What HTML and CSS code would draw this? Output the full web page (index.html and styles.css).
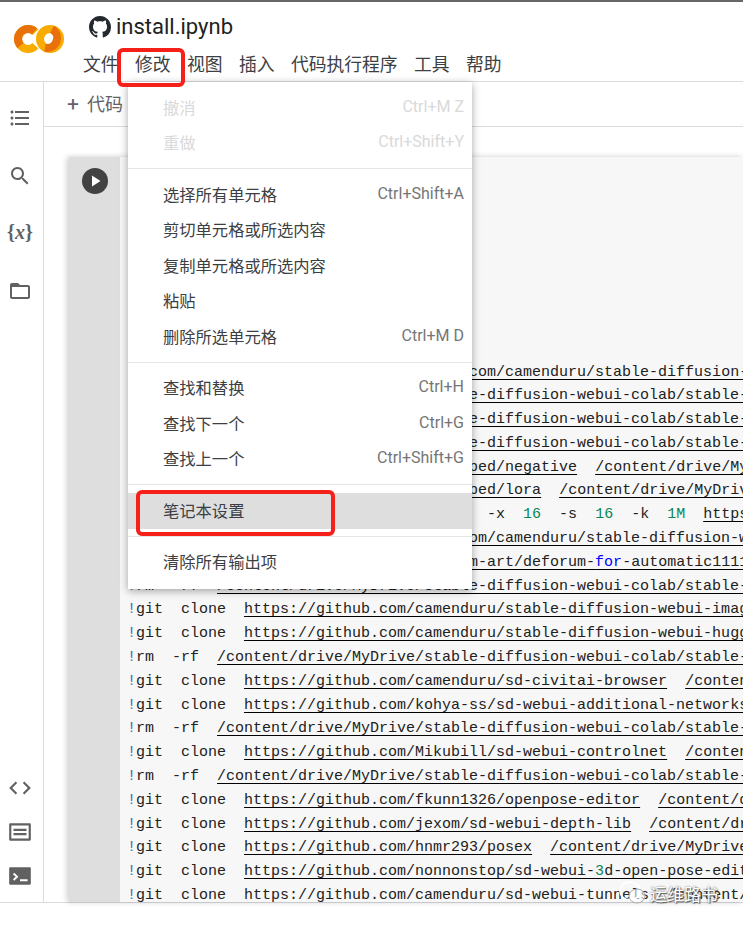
FILE: index.html
```html
<!DOCTYPE html>
<html lang="zh-CN">

<head>
    <meta charset="UTF-8">
    <title>install.ipynb - Colaboratory</title>
    <link rel="stylesheet" href="styles.css">
</head>

<body>

    <div class="page">
        <header class="header">
            <svg class="logo" width="50" height="30" viewBox="0 0 50 30">
                <path d="M21.400 8.200A10 10 0 1 0 21.400 21.800" fill="none" stroke="#f9ab00" stroke-width="8"/>
                <path d="M20.500 7.400A10 10 0 0 0 6.500 21.600" fill="none" stroke="#e8710a" stroke-width="8"/>
                <circle cx="36" cy="15" r="10" fill="none" stroke="#f9ab00" stroke-width="8"/>
                <path d="M38 5.200A10 10 0 0 1 31 23.700" fill="none" stroke="#e8710a" stroke-width="8"/>
            </svg>
            <div class="header-main">
                <div class="title-row">
                    <svg class="github" width="22" height="22" viewBox="0 0 16 16">
                        <path fill="#24292e" d="M8 0C3.58 0 0 3.58 0 8c0 3.54 2.29 6.53 5.47 7.59.4.07.55-.17.55-.38 0-.19-.01-.82-.01-1.49-2.01.37-2.53-.49-2.69-.94-.09-.23-.48-.94-.82-1.13-.28-.15-.68-.52-.01-.53.63-.01 1.08.58 1.23.82.72 1.21 1.87.87 2.33.66.07-.52.28-.87.51-1.07-1.78-.2-3.64-.89-3.64-3.95 0-.87.31-1.59.82-2.15-.08-.2-.36-1.02.08-2.12 0 0 .67-.21 2.2.82.64-.18 1.32-.27 2-.27.68 0 1.36.09 2 .27 1.53-1.04 2.2-.82 2.2-.82.44 1.1.16 1.92.08 2.12.51.56.82 1.27.82 2.15 0 3.07-1.87 3.75-3.65 3.95.29.25.54.73.54 1.48 0 1.07-.01 1.93-.01 2.2 0 .21.15.46.55.38A8.013 8.013 0 0016 8c0-4.42-3.58-8-8-8z"/>
                    </svg>
                    <span class="title">install.ipynb</span>
                </div>
                <nav class="menubar">
                    <span>文件</span>
                    <span>修改</span>
                    <span>视图</span>
                    <span>插入</span>
                    <span>代码执行程序</span>
                    <span>工具</span>
                    <span>帮助</span>
                </nav>
            </div>
        </header>

        <div class="workspace">
            <aside class="sidebar">
                <div class="side-top">
                    <svg class="side-icon" viewBox="0 0 24 24"><path d="M4 10.5c-.83 0-1.5.67-1.5 1.5s.67 1.5 1.5 1.5 1.5-.67 1.5-1.5-.67-1.5-1.5-1.5zm0-6c-.83 0-1.5.67-1.5 1.5S3.17 7.5 4 7.5 5.5 6.83 5.5 6 4.83 4.5 4 4.5zm0 12c-.83 0-1.5.68-1.5 1.5s.68 1.5 1.5 1.5 1.5-.68 1.5-1.5-.67-1.5-1.5-1.5zM7 19h14v-2H7v2zm0-6h14v-2H7v2zm0-8v2h14V5H7z"/></svg>
                    <svg class="side-icon" viewBox="0 0 24 24"><path d="M15.5 14h-.79l-.28-.27C15.41 12.59 16 11.11 16 9.5 16 5.91 13.09 3 9.5 3S3 5.91 3 9.5 5.91 16 9.5 16c1.61 0 3.09-.59 4.23-1.57l.27.28v.79l5 4.99L20.49 19l-4.99-5zm-6 0C7.01 14 5 11.99 5 9.5S7.01 5 9.5 5 14 7.01 14 9.5 11.99 14 9.5 14z"/></svg>
                    <span class="side-var">{<i>x</i>}</span>
                    <svg class="side-icon" viewBox="0 0 24 24"><path d="M20 6h-8l-2-2H4c-1.1 0-1.99.9-1.99 2L2 18c0 1.1.9 2 2 2h16c1.1 0 2-.9 2-2V8c0-1.1-.9-2-2-2zm0 12H4V8h16v10z"/></svg>
                </div>
                <div class="side-bottom">
                    <svg class="side-icon side-icon-big" viewBox="0 0 24 24"><path d="M9.4 16.6L4.8 12l4.6-4.6L8 6l-6 6 6 6 1.4-1.4zm5.2 0l4.6-4.6-4.6-4.6L16 6l6 6-6 6-1.4-1.4z"/></svg>
                    <svg class="side-icon side-icon-big" viewBox="0 0 24 24"><path fill-rule="evenodd" d="M3 4h18c.6 0 1 .4 1 1v14c0 .6-.4 1-1 1H3c-.6 0-1-.4-1-1V5c0-.6.4-1 1-1zm1 2v12h16V6H4zm2 3h12v2H6V9zm0 4h12v2H6v-2z"/></svg>
                    <svg class="side-icon side-icon-big" viewBox="0 0 24 24"><path fill-rule="evenodd" d="M3 4h18c.6 0 1 .4 1 1v14c0 .6-.4 1-1 1H3c-.6 0-1-.4-1-1V5c0-.6.4-1 1-1zm2.5 6.4L8 12.7l-2.5 2.3L6.7 16.300l3.800-3.600-3.800-3.600-1.200 1.300zM12 15v1.800h7V15h-7z"/></svg>
                </div>
            </aside>

            <main class="content">
                <div class="toolbar"><span class="plus">+</span> 代码</div>
                <div class="cell-area">
                    <section class="cell">
                        <div class="gutter">
                            <svg class="run" width="26" height="26" viewBox="0 0 26 26">
                                <circle cx="13" cy="13" r="13" fill="#424242"/>
                                <path d="M10 7.500v11l8.500-5.500z" fill="#fff"/>
                            </svg>
                        </div>
                        <div class="code">
<div><b>!</b>git  clone  -b  v2.2  <u>https://github.com/camenduru/stable-diffusion-webui</u></div>
<div><b>!</b>rm  -rf  <u>/content/drive/MyDrive/stable-diffusion-webui-colab/stable-diffusion-webui</u></div>
<div><b>!</b>rm  -rf  <u>/content/drive/MyDrive/stable-diffusion-webui-colab/stable-diffusion-webui</u></div>
<div><b>!</b>rm  -rf  <u>/content/drive/MyDrive/stable-diffusion-webui-colab/stable-diffusion-webui</u></div>
<div><b>!</b>git  clone  <u>https://huggingface.co/embed/negative</u>  <u>/content/drive/MyDrive/stable-diffusion-webui</u></div>
<div><b>!</b>git  clone  <u>https://huggingface.co/embed/lora</u>  <u>/content/drive/MyDrive/stable-diffusion-webui</u></div>
<div><b>!</b>aria2c  --console-log-level=error  -c  -x  <em>16</em>  -s  <em>16</em>  -k  <em>1M</em>  <u>https://huggingface.co/embed</u></div>
<div><b>!</b>git  clone  -b  dev  <u>https://github.com/camenduru/stable-diffusion-webui-colab</u></div>
<div><b>!</b>git  clone  <u>https://github.com/deforum-art/deforum-<a>for</a>-automatic1111-webui</u></div>
<div><b>!</b>rm  -rf  <u>/content/drive/MyDrive/stable-diffusion-webui-colab/stable-diffusion-webui</u></div>
<div><b>!</b>git  clone  <u>https://github.com/camenduru/stable-diffusion-webui-images-browser</u></div>
<div><b>!</b>git  clone  <u>https://github.com/camenduru/stable-diffusion-webui-huggingface</u></div>
<div><b>!</b>rm  -rf  <u>/content/drive/MyDrive/stable-diffusion-webui-colab/stable-diffusion-webui</u></div>
<div><b>!</b>git  clone  <u>https://github.com/camenduru/sd-civitai-browser</u>  <u>/content/drive/MyDrive</u></div>
<div><b>!</b>git  clone  <u>https://github.com/kohya-ss/sd-webui-additional-networks</u>  <u>/content/drive</u></div>
<div><b>!</b>rm  -rf  <u>/content/drive/MyDrive/stable-diffusion-webui-colab/stable-diffusion-webui</u></div>
<div><b>!</b>git  clone  <u>https://github.com/Mikubill/sd-webui-controlnet</u>  <u>/content/drive/MyDrive</u></div>
<div><b>!</b>rm  -rf  <u>/content/drive/MyDrive/stable-diffusion-webui-colab/stable-diffusion-webui</u></div>
<div><b>!</b>git  clone  <u>https://github.com/fkunn1326/openpose-editor</u>  <u>/content/drive/MyDrive</u></div>
<div><b>!</b>git  clone  <u>https://github.com/jexom/sd-webui-depth-lib</u>  <u>/content/drive/MyDrive</u></div>
<div><b>!</b>git  clone  <u>https://github.com/hnmr293/posex</u>  <u>/content/drive/MyDrive/stable-diffusion</u></div>
<div><b>!</b>git  clone  <u>https://github.com/nonnonstop/sd-webui-<em>3</em>d-open-pose-editor</u>  <u>/content/drive</u></div>
<div><b>!</b>git  clone  <u>https://github.com/camenduru/sd-webui-tunnels</u>  <u>/content/drive/MyDrive</u></div>
                        </div>
                    </section>
                </div>
            </main>
        </div>

        <!-- edit dropdown, sits over the notebook -->
        <div class="dropdown">
            <div class="item off"><span>撤消</span><kbd>Ctrl+M Z</kbd></div>
            <div class="item off"><span>重做</span><kbd>Ctrl+Shift+Y</kbd></div>
            <hr>
            <div class="item"><span>选择所有单元格</span><kbd>Ctrl+Shift+A</kbd></div>
            <div class="item"><span>剪切单元格或所选内容</span></div>
            <div class="item"><span>复制单元格或所选内容</span></div>
            <div class="item"><span>粘贴</span></div>
            <div class="item"><span>删除所选单元格</span><kbd>Ctrl+M D</kbd></div>
            <hr>
            <div class="item"><span>查找和替换</span><kbd>Ctrl+H</kbd></div>
            <div class="item"><span>查找下一个</span><kbd>Ctrl+G</kbd></div>
            <div class="item"><span>查找上一个</span><kbd>Ctrl+Shift+G</kbd></div>
            <hr>
            <div class="item active"><span>笔记本设置</span></div>
            <hr>
            <div class="item"><span>清除所有输出项</span></div>
        </div>

        <div class="mark mark-menu"></div>
        <div class="mark mark-item"></div>

        <div class="watermark">
            <svg width="30" height="26" viewBox="0 0 30 26">
                <ellipse cx="12" cy="11" rx="10" ry="9" fill="none" stroke="#fff" stroke-width="1.500"/>
                <ellipse cx="19" cy="16" rx="8" ry="7" fill="#fff" fill-opacity="0.6" stroke="#aaa"/>
            </svg>
            <span>运维路书</span>
        </div>
    </div>

</body>

</html>
```

FILE: styles.css
```css
* {
    box-sizing: border-box;
}

body {
    margin: 0;
    background-color: #fff;
    font-family: "Noto Sans CJK SC", "Noto Sans", sans-serif;
}

.page {
    position: relative;
    width: 743px;
    height: 930px;
    overflow: hidden;
    border-top: 2px solid #666;
}

/* header */
.header {
    display: flex;
    height: 80px;
    border-bottom: 1px solid #dadce0;
}

.logo {
    flex: none;
    margin: 22px 19px 0 14px;
}

.header-main {
    display: flex;
    flex-direction: column;
}

.title-row {
    display: flex;
    align-items: center;
    gap: 5px;
    height: 34px;
    padding: 15px 0 0 6px;
}

.title {
    font-family: Roboto, sans-serif;
    font-size: 22px;
    color: #212121;
}

.menubar {
    display: flex;
    gap: 16.400px;
    margin-top: 14px;
    font-size: 17.800px;
    line-height: 26px;
    color: #3c4043;
}

/* sidebar */
.workspace {
    display: flex;
    height: 821px;
    border-bottom: 1px solid #dadce0;
}

.sidebar {
    display: flex;
    flex: none;
    flex-direction: column;
    justify-content: space-between;
    width: 44px;
    padding: 24px 3px 13px 0;
    border-right: 1px solid #dadce0;
}

.side-top,
.side-bottom {
    display: flex;
    flex-direction: column;
    align-items: center;
}

.side-top {
    gap: 34px;
}

.side-bottom {
    gap: 18px;
}

.side-icon {
    width: 24px;
    height: 24px;
    fill: #616161;
}

.side-icon-big {
    width: 26px;
    height: 26px;
}

.side-var {
    height: 24px;
    margin: -2px 0 1px;
    font-family: "Liberation Serif", serif;
    font-size: 20px;
    font-weight: bold;
    line-height: 24px;
    color: #616161;
}

/* notebook */
.content {
    display: flex;
    flex: 1;
    flex-direction: column;
    min-width: 0;
}

.toolbar {
    height: 45px;
    padding-left: 23px;
    border-bottom: 1px solid #dadce0;
    font-size: 18px;
    line-height: 43px;
    color: #5f6368;
}

.plus {
    margin-right: 4px;
    font-family: Roboto, sans-serif;
    font-size: 21px;
}

.cell-area {
    flex: 1;
    min-height: 0;
    padding: 30px 0 0 25px;
}

.cell {
    display: flex;
    height: 100%;
    overflow: hidden;
    background-color: #f7f7f7;
    box-shadow: -2px 0 6px rgba(0, 0, 0, 0.2);
}

.gutter {
    flex: none;
    width: 51px;
    padding: 11px 0 0 13px;
    background-color: #dedede;
}

.run {
    display: block;
}

.code {
    flex: 1;
    min-width: 0;
    padding: 203.500px 0 0 9px;
    font-family: "Liberation Mono", monospace;
    font-size: 15px;
    line-height: 23.800px;
    color: #212121;
}

.code div {
    white-space: pre;
}

.code b {
    margin-left: -2px;
    font-weight: normal;
    color: #3a6fb5;
}

.code u {
    text-decoration-color: #000;
    text-underline-offset: 3px;
}

.code em {
    font-style: normal;
    color: #098658;
}

.code a {
    color: #0000ff;
}

/* edit menu */
.dropdown {
    position: absolute;
    top: 80px;
    left: 128px;
    width: 344px;
    height: 507px;
    padding-top: 8px;
    background-color: #fff;
    box-shadow: 0 2px 8px rgba(0, 0, 0, 0.35);
}

.item {
    display: flex;
    justify-content: space-between;
    align-items: center;
    height: 35.500px;
    padding: 0 8px 2px 35px;
    font-size: 16.300px;
    color: #3c4043;
}

.item kbd {
    margin-top: -1px;
    font-family: Roboto, sans-serif;
    font-size: 16px;
    color: #757575;
}

.item.off span,
.item.off kbd {
    color: #d9d9d9;
}

.item.active {
    background-color: #dedede;
}

.dropdown hr {
    height: 1px;
    margin: 7px 0 8px;
    border: none;
    background-color: #e6e6e6;
}

/* red annotation boxes drawn over the screenshot */
.mark {
    position: absolute;
    border: 4px solid #f5201a;
    border-radius: 6px;
}

.mark-menu {
    top: 46px;
    left: 117px;
    width: 68px;
    height: 39px;
}

.mark-item {
    top: 488px;
    left: 136px;
    width: 199px;
    height: 46px;
}

.watermark {
    position: absolute;
    top: 878px;
    left: 618px;
    display: flex;
    align-items: center;
    gap: 2px;
    font-size: 17px;
    color: #fff;
    text-shadow: 0 0 2px #555, 1px 1px 1px #555;
}
```
